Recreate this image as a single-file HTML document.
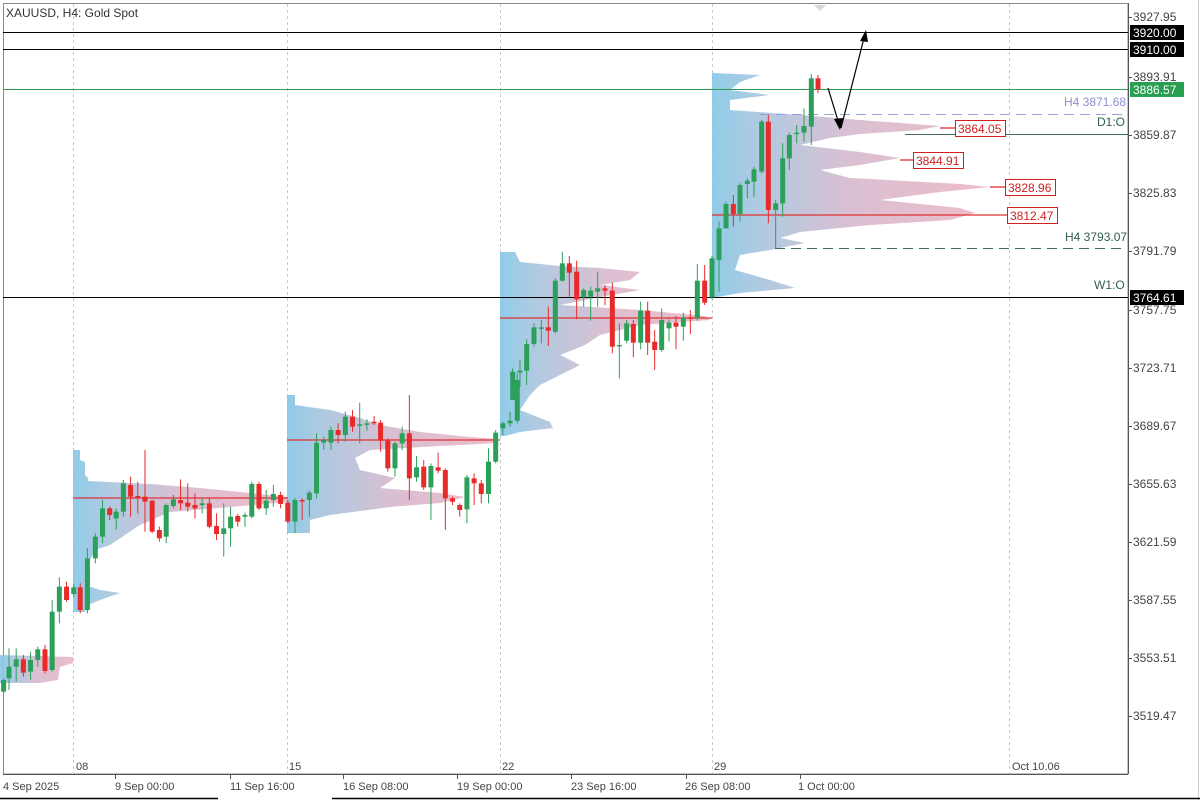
<!DOCTYPE html>
<html><head><meta charset="utf-8"><style>
html,body{margin:0;padding:0;background:#fff;width:1200px;height:800px;overflow:hidden}
svg text{font-family:"Liberation Sans","DejaVu Sans",sans-serif;}
</style></head><body>
<svg id="s" width="1200" height="800" xmlns="http://www.w3.org/2000/svg">
<defs>
<linearGradient id="vp" x1="0" y1="0" x2="1" y2="0">
<stop offset="0" stop-color="#84c6e6"/><stop offset="0.15" stop-color="#a4c5df"/><stop offset="0.5" stop-color="#d6b9cd"/><stop offset="1" stop-color="#ecb4c4"/>
</linearGradient>
</defs>
<rect x="0" y="0" width="1200" height="800" fill="#fff"/>
<rect x="3.5" y="3.5" width="1124.5" height="770.5" fill="none" stroke="#888" stroke-width="1"/>
<g stroke="#c8c8c8" stroke-dasharray="3,3" stroke-width="1">
<line x1="73.5" y1="4" x2="73.5" y2="774"/><line x1="287.5" y1="4" x2="287.5" y2="774"/>
<line x1="500.5" y1="4" x2="500.5" y2="774"/><line x1="712.5" y1="4" x2="712.5" y2="774"/>
<line x1="1009.5" y1="4" x2="1009.5" y2="774"/>
</g>
<polygon points="814,5 826,5 820,11" fill="#d8d8d8"/>
<g fill="url(#vp)" opacity="0.9">
<polygon points="0,655 73,657 73,663 60,667 58,680 40,683 0,683"/>
<polygon points="73,450 80,450 80,460 85,462 85,475 88,478 88,481 150,484 200,488 250,493 288,497 288,502 230,507 170,512 140,525 125,535 110,545 95,550 90,560 85,585 100,590 120,593 100,600 88,605 85,612 73,612"/>
<polygon points="287,395 295,395 295,405 330,410 360,418 380,425 420,432 470,437 498,439 498,443 440,446 370,450 355,458 360,470 395,478 380,488 440,493 465,497 440,503 390,507 330,515 310,520 310,533 287,533"/>
<polygon points="500,252 515,252 520,262 560,266 600,268 640,272 630,280 600,285 640,290 600,297 560,305 640,310 705,316 710,320 640,325 600,335 585,345 560,355 580,365 560,375 540,385 530,395 520,410 550,422 553,428 520,432 505,436 500,436"/>
<polygon points="712,73 760,75 740,82 730,90 770,95 730,100 730,110 800,115 860,120 940,126 920,130 860,134 830,138 800,145 860,152 900,158 860,165 820,170 850,178 960,184 990,187 940,192 880,200 960,208 975,213 950,220 870,225 800,232 780,238 805,243 770,250 740,255 735,270 770,280 795,288 740,293 712,298"/>
</g>
<g stroke="#e03030" stroke-width="1.3">
<line x1="73" y1="498" x2="288" y2="498"/><line x1="287" y1="440" x2="500" y2="440"/>
<line x1="500" y1="318" x2="712" y2="318"/><line x1="712" y1="215" x2="1007" y2="215"/>
<line x1="940" y1="128" x2="955" y2="128"/><line x1="900" y1="160" x2="913" y2="160"/>
<line x1="990" y1="187" x2="1005" y2="187"/>
</g>
<line x1="3" y1="32.5" x2="1128" y2="32.5" stroke="#000"/>
<line x1="3" y1="49.5" x2="1128" y2="49.5" stroke="#000"/>
<line x1="3" y1="89.5" x2="1128" y2="89.5" stroke="#2a9a55"/>
<line x1="3" y1="297.5" x2="1128" y2="297.5" stroke="#000"/>
<line x1="760" y1="114.5" x2="1125" y2="114.5" stroke="#9aa0dd" stroke-dasharray="10,6"/>
<line x1="905" y1="134.5" x2="1128" y2="134.5" stroke="#3f6f5a"/>
<line x1="775" y1="248.5" x2="1125" y2="248.5" stroke="#3f6f5a" stroke-dasharray="10,6"/>
<g id="candles"></g>
<g font-size="12" fill="#d02020">
<rect x="955.5" y="120.5" width="50" height="16" fill="#fff" stroke="#d02020"/><text x="958" y="133">3864.05</text>
<rect x="913.5" y="152.5" width="50" height="16" fill="#fff" stroke="#d02020"/><text x="916" y="165">3844.91</text>
<rect x="1005.5" y="179.5" width="50" height="16" fill="#fff" stroke="#d02020"/><text x="1008" y="192">3828.96</text>
<rect x="1007.5" y="207.5" width="50" height="16" fill="#fff" stroke="#d02020"/><text x="1010" y="220">3812.47</text>
</g>
<g font-size="12">
<text x="1064" y="106" fill="#8c8fd0">H4 3871.68</text>
<text x="1097" y="126" fill="#2f5f4f">D1:O</text>
<text x="1065" y="241" fill="#2f5f4f">H4 3793.07</text>
<text x="1094" y="289" fill="#2f5f4f">W1:O</text>
</g>
<g stroke="#000" stroke-width="1.2" fill="none">
<line x1="828" y1="88" x2="839" y2="124"/>
<line x1="841" y1="128" x2="864" y2="38"/>
</g>
<polygon points="840,130 834,119 843,118" fill="#000"/>
<polygon points="866,30 860,41 868,42" fill="#000"/>
<text x="6" y="17" font-size="12" fill="#333">XAUUSD, H4:  Gold Spot</text>
<line x1="1128.5" y1="3" x2="1128.5" y2="774" stroke="#555"/>
<g font-size="12" fill="#444" id="pax"></g>
<rect x="1130" y="25" width="54" height="15" fill="#000"/><text x="1133" y="37" font-size="12" fill="#fff">3920.00</text>
<rect x="1130" y="42" width="54" height="15" fill="#000"/><text x="1133" y="54" font-size="12" fill="#fff">3910.00</text>
<rect x="1130" y="82" width="54" height="15" fill="#27a051"/><text x="1133" y="94" font-size="12" fill="#fff">3886.57</text>
<rect x="1130" y="290" width="54" height="15" fill="#000"/><text x="1133" y="302" font-size="12" fill="#fff">3764.61</text>
<line x1="1198.5" y1="0" x2="1198.5" y2="800" stroke="#ccc"/>
<g font-size="11" fill="#444">
<text x="76" y="770">08</text><text x="289" y="770">15</text><text x="502" y="770">22</text><text x="714" y="770">29</text><text x="1012" y="770">Oct 10.06</text>
<text x="3" y="790">4 Sep 2025</text><text x="115" y="790">9 Sep 00:00</text><text x="230" y="790">11 Sep 16:00</text>
<text x="343" y="790">16 Sep 08:00</text><text x="457" y="790">19 Sep 00:00</text><text x="571" y="790">23 Sep 16:00</text>
<text x="685" y="790">26 Sep 08:00</text><text x="798" y="790">1 Oct 00:00</text>
</g>
<g stroke="#555">
<line x1="3" y1="774.5" x2="1128" y2="774.5"/>
<line x1="115.5" y1="774" x2="115.5" y2="779"/><line x1="230.5" y1="774" x2="230.5" y2="779"/>
<line x1="343.5" y1="774" x2="343.5" y2="779"/><line x1="457.5" y1="774" x2="457.5" y2="779"/>
<line x1="571.5" y1="774" x2="571.5" y2="779"/><line x1="686.5" y1="774" x2="686.5" y2="779"/>
<line x1="800.5" y1="774" x2="800.5" y2="779"/>
</g>
<line x1="0" y1="798.5" x2="218" y2="798.5" stroke="#000" stroke-width="1.5"/>
<line x1="332" y1="798.5" x2="1200" y2="798.5" stroke="#000" stroke-width="1.5"/>
</svg>
<script>
var NS="http://www.w3.org/2000/svg";
function el(t,a,p){var e=document.createElementNS(NS,t);for(var k in a)e.setAttribute(k,a[k]);p.appendChild(e);return e;}
var pax=document.getElementById('pax');
[["3927.95",17],["3893.91",77],["3859.87",135],["3825.83",193],["3791.79",251],["3757.75",310],["3723.71",368],["3689.67",426],["3655.63",484],["3621.59",542],["3587.55",600],["3553.51",658],["3519.47",716]].forEach(function(p){
el('line',{x1:1128,y1:p[1]+0.5,x2:1132,y2:p[1]+0.5,stroke:'#555'},pax);
var t=el('text',{x:1133,y:p[1]+4},pax);t.textContent=p[0];});
var g=document.getElementById('candles');
var G='#2ca05a',R='#e82a2a';
function draw(list,fx,fy){list.forEach(function(c){var col=c[0]=='g'?G:R;var x=fx(c[1]);
var o=fy(c[2]),cl=fy(c[3]),h=fy(c[4]),l=fy(c[5]);var top=Math.min(o,cl),bot=Math.max(o,cl);
el('line',{x1:x,y1:h,x2:x,y2:l,stroke:col,'stroke-width':1},g);
el('rect',{x:x-2.5,y:top,width:5,height:Math.max(1.5,bot-top),fill:col},g);});}
var z3=[['g',10,900,935,895,940],['g',25,860,895,805,930],['g',45,838,860,805,905],['r',65,838,878,825,890],['g',85,840,875,815,900],['g',105,808,840,800,860],['r',125,808,873,795,880],['g',145,695,870,660,875],['g',165,620,695,592,730],['r',185,620,660,605,665],['g',205,622,642,612,650],['r',223,622,690,610,700],['g',243,535,690,505,700],['g',265,470,535,460,550],['g',285,385,470,360,490],['r',305,385,405,380,420],['g',323,395,415,385,450],['g',343,310,395,300,410],['r',363,315,350,290,410],['r',383,348,352,305,400],['r',403,350,365,210,455],['r',423,362,455,360,460],['r',443,450,475,440,485],['g',462,375,470,370,490],['g',482,358,378,345,385],['r',502,360,370,298,390],['r',522,368,380,310,395],['r',542,375,385,340,415],['g',562,370,375,355,400],['r',582,370,440,355,445],['r',602,438,462,400,480],['g',622,445,462,370,530],['g',641,410,445,380,500],['r',661,408,425,402,440],['g',681,405,410,398,440],['g',700,312,410,305,415],['r',720,312,385,305,390],['g',740,362,385,330,405],['g',760,342,360,315,380],['r',780,345,372,335,385],['r',800,368,425,360,430],['g',820,360,425,355,460],['r',840,360,362,355,420],['g',860,338,360,332,410],['g',880,188,340,160,355],['g',900,180,188,170,210],['g',920,150,188,140,210],['r',940,150,165,130,190],['g',960,110,165,95,185],['r',980,110,140,90,155],['g',1000,133,137,68,190],['g',1020,130,133,118,152],['r',1040,125,130,108,135],['r',1058,128,182,120,215],['r',1078,182,265,175,275],['g',1098,190,265,185,290],['g',1118,160,190,140,210],['r',1138,160,295,45,360],['g',1158,262,292,228,305],['r',1178,260,322,240,330],['g',1198,258,322,250,420],['r',1218,262,272,218,280],['r',1238,270,355,265,450],['r',1258,355,365,350,375],['r',1278,375,390,370,410],['g',1298,292,388,285,430],['r',1318,295,310,280,375],['r',1338,310,342,300,370],['g',1358,245,342,205,370],['g',1378,158,245,150,250],['g',1398,130,145,125,165],['g',1418,122,130,95,140],['g',1438,0,122,-20,130]];
draw(z3,function(x){return x/2.78;},function(y){return y/3+380;});
var z6=[['g',38,395,480,385,480],['g',60,392,398,360,440],['g',80,312,392,298,435],['g',102,262,312,250,320],['g',124,262,264,240,310],['r',145,262,272,200,318],['g',166,122,275,115,280],['g',187,70,122,35,125],['r',208,70,98,48,170],['r',230,95,178,62,238],['g',251,150,172,145,200],['g',272,152,170,140,242],['g',293,145,155,95,200],['r',315,145,152,135,195],['r',337,152,320,128,340],['g',358,315,318,250,415],['g',380,250,302,240,310],['r',400,252,308,240,352],['g',422,212,308,185,328],['r',443,212,308,185,345],['r',464,305,330,270,390],['g',485,240,330,205,335],['g',507,248,265,238,305],['r',528,248,260,228,328],['g',550,232,260,218,302],['r',571,232,236,210,282],['g',592,122,235,72,242],['r',614,122,188,75,195],['g',636,55,172,48,178]];
draw(z6,function(x){return 500+x/3;},function(y){return 240+y/3;});
var z1=[['g',57,505,600,485,695],['g',78,432,505,425,505],['r',100,432,462,405,500],['g',120,375,462,370,485],['g',142,362,372,355,415],['g',162,328,365,320,410],['g',185,185,335,180,340],['r',205,185,450,165,490],['g',227,430,450,420,565],['g',248,295,430,250,470],['g',268,225,295,218,330],['g',290,218,222,195,250],['g',312,198,218,145,245],['g',334,55,200,42,255],['r',354,55,88,45,100]];
draw(z1,function(x){return 700+x/3;},function(y){return 60+y/3;});
</script>
</body></html>
